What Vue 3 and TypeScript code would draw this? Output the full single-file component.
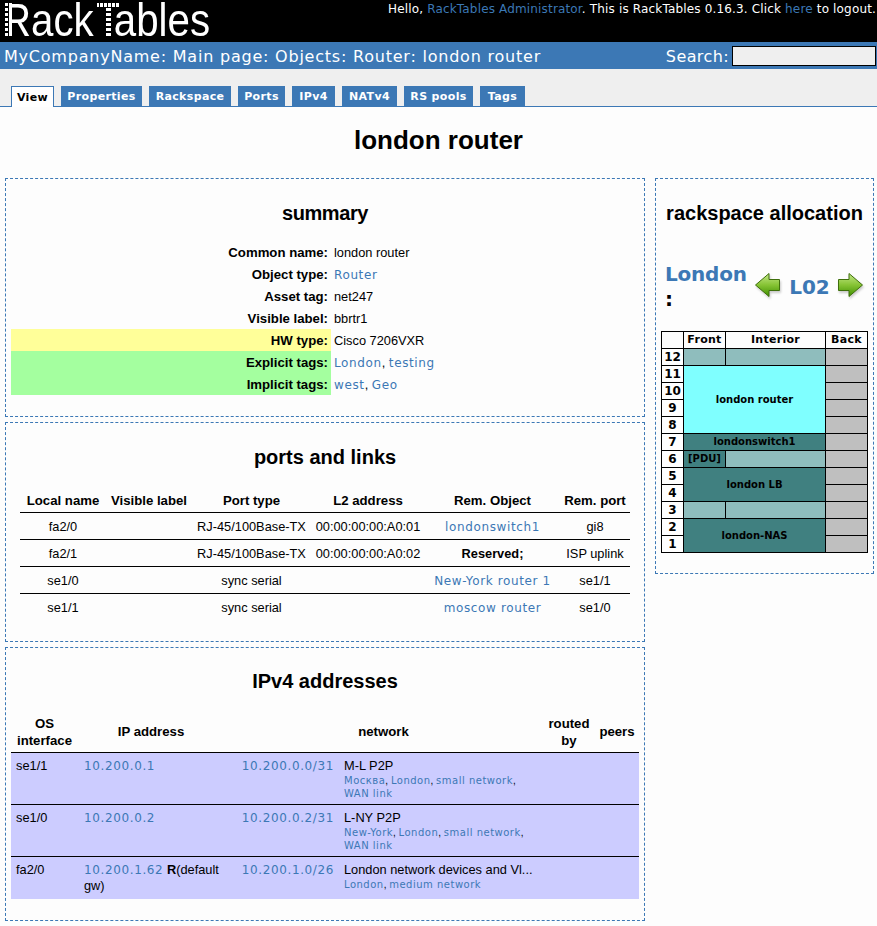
<script setup lang="ts">
const tabs = ['View', 'Properties', 'Rackspace', 'Ports', 'IPv4', 'NATv4', 'RS pools', 'Tags']
const tabWidths = [43, 81, 82, 47, 43, 55, 69, 45]

interface Port { local: string; type: string; l2: string; rem: string; remLink: boolean; remPort: string }
const ports: Port[] = [
  { local: 'fa2/0', type: 'RJ-45/100Base-TX', l2: '00:00:00:00:A0:01', rem: 'londonswitch1', remLink: true, remPort: 'gi8' },
  { local: 'fa2/1', type: 'RJ-45/100Base-TX', l2: '00:00:00:00:A0:02', rem: 'Reserved;', remLink: false, remPort: 'ISP uplink' },
  { local: 'se1/0', type: 'sync serial', l2: '', rem: 'New-York router 1', remLink: true, remPort: 'se1/1' },
  { local: 'se1/1', type: 'sync serial', l2: '', rem: 'moscow router', remLink: true, remPort: 'se1/0' },
]

interface Cell { text: string; cls: string; span?: number; rows?: number }
interface RackRow { n: number; cells: Cell[] }
const rack: RackRow[] = [
  { n: 12, cells: [{ text: '', cls: 'free' }, { text: '', cls: 'free' }, { text: '', cls: 'back' }] },
  { n: 11, cells: [{ text: 'london router', cls: 'sel', span: 2, rows: 4 }, { text: '', cls: 'back' }] },
  { n: 10, cells: [{ text: '', cls: 'back' }] },
  { n: 9, cells: [{ text: '', cls: 'back' }] },
  { n: 8, cells: [{ text: '', cls: 'back' }] },
  { n: 7, cells: [{ text: 'londonswitch1', cls: 'used', span: 2 }, { text: '', cls: 'back' }] },
  { n: 6, cells: [{ text: '[PDU]', cls: 'used' }, { text: '', cls: 'free' }, { text: '', cls: 'back' }] },
  { n: 5, cells: [{ text: 'london LB', cls: 'used', span: 2, rows: 2 }, { text: '', cls: 'back' }] },
  { n: 4, cells: [{ text: '', cls: 'back' }] },
  { n: 3, cells: [{ text: '', cls: 'free' }, { text: '', cls: 'free' }, { text: '', cls: 'back' }] },
  { n: 2, cells: [{ text: 'london-NAS', cls: 'used', span: 2, rows: 2 }, { text: '', cls: 'back' }] },
  { n: 1, cells: [{ text: '', cls: 'back' }] },
]
</script>

<template>
  <div class="page">
    <header class="top">
      <div class="logo">RackTables</div>
      <span class="ear ear-r"></span>
      <span class="ear ear-t"></span>
      <span class="ear-bar"></span>
      <div class="hello">Hello, <a>RackTables Administrator</a>. This is RackTables 0.16.3. Click <a>here</a> to logout.</div>
    </header>
    <nav class="crumbs">
      <div class="path">MyCompanyName: Main page: Objects: Router: london router</div>
      <div class="search"><span>Search:</span><input class="search-box" type="text" /></div>
    </nav>
    <div class="tabs">
      <span v-for="(t, i) in tabs" :key="t" class="tab" :class="{ active: i === 0 }" :style="{ width: tabWidths[i] + 'px' }">{{ t }}</span>
    </div>

    <h1>london router</h1>

    <main class="columns">
      <div class="left">
        <section class="panel summary">
          <h2 class="tight">summary</h2>
          <table class="sum">
            <tbody>
              <tr><th>Common name:</th><td>london router</td></tr>
              <tr><th>Object type:</th><td><a>Router</a></td></tr>
              <tr><th>Asset tag:</th><td>net247</td></tr>
              <tr><th>Visible label:</th><td>bbrtr1</td></tr>
              <tr><th class="yellow">HW type:</th><td>Cisco 7206VXR</td></tr>
              <tr><th class="green">Explicit tags:</th><td><a>London</a>, <a>testing</a></td></tr>
              <tr><th class="green">Implicit tags:</th><td><a>west</a>, <a>Geo</a></td></tr>
            </tbody>
          </table>
        </section>

        <section class="panel links">
          <h2>ports and links</h2>
          <table class="ports">
            <colgroup><col style="width:86px" /><col style="width:86px" /><col style="width:119px" /><col style="width:114px" /><col style="width:135px" /><col style="width:70px" /></colgroup>
            <thead>
              <tr><th>Local name</th><th>Visible label</th><th>Port type</th><th>L2 address</th><th>Rem. Object</th><th>Rem. port</th></tr>
            </thead>
            <tbody>
              <tr v-for="p in ports" :key="p.local">
                <td>{{ p.local }}</td><td></td><td>{{ p.type }}</td><td>{{ p.l2 }}</td>
                <td><a v-if="p.remLink">{{ p.rem }}</a><b v-else>{{ p.rem }}</b></td>
                <td>{{ p.remPort }}</td>
              </tr>
            </tbody>
          </table>
        </section>

        <section class="panel addrs">
          <h2>IPv4 addresses</h2>
          <table class="ipv4">
            <colgroup><col style="width:67px" /><col style="width:146px" /><col style="width:115px" /><col style="width:204px" /><col style="width:52px" /><col style="width:44px" /></colgroup>
            <thead>
              <tr><th>OS<br />interface</th><th>IP address</th><th colspan="2">network</th><th>routed<br />by</th><th>peers</th></tr>
            </thead>
            <tbody>
              <tr>
                <td>se1/1</td><td><a>10.200.0.1</a></td><td class="net"><a>10.200.0.0/31</a></td>
                <td>M-L P2P<div class="tags"><a>Москва</a>, <a>London</a>, <a>small network</a>, <a>WAN link</a></div></td>
                <td></td><td></td>
              </tr>
              <tr>
                <td>se1/0</td><td><a>10.200.0.2</a></td><td class="net"><a>10.200.0.2/31</a></td>
                <td>L-NY P2P<div class="tags"><a>New-York</a>, <a>London</a>, <a>small network</a>, <a>WAN link</a></div></td>
                <td></td><td></td>
              </tr>
              <tr>
                <td>fa2/0</td><td><a>10.200.1.62</a> <b>R</b>(default gw)</td><td class="net"><a>10.200.1.0/26</a></td>
                <td>London network devices and Vl...<div class="tags"><a>London</a>, <a>medium network</a></div></td>
                <td></td><td></td>
              </tr>
            </tbody>
          </table>
        </section>
      </div>

      <aside class="panel right">
        <h2>rackspace allocation</h2>
        <div class="rack-head">
          <div class="row-name"><a>London</a><br /><b>:</b></div>
          <svg class="arrow" width="26" height="28" viewBox="0 0 26 28" aria-hidden="true">
            <defs>
              <linearGradient id="ag" x1="0" y1="0" x2="0" y2="1"><stop offset="0" stop-color="#c4e88a" /><stop offset="0.5" stop-color="#86c334" /><stop offset="1" stop-color="#3f9000" /></linearGradient>
            </defs>
            <path d="M.5 12 L14 .5 V6.5 H24.5 V17.5 H14 V23.5 Z" fill="url(#ag)" stroke="#3f6f0c" stroke-width="1" stroke-linejoin="round" />
          </svg>
          <a class="rack-name">L02</a>
          <svg class="arrow" width="26" height="28" viewBox="0 0 26 28" aria-hidden="true">
            <path d="M24.5 12 L11 .5 V6.5 H.5 V17.5 H11 V23.5 Z" fill="url(#ag)" stroke="#3f6f0c" stroke-width="1" stroke-linejoin="round" />
          </svg>
        </div>
        <table class="rack">
          <colgroup><col style="width:22px" /><col style="width:42px" /><col style="width:100px" /><col style="width:42px" /></colgroup>
          <thead><tr><th></th><th>Front</th><th>Interior</th><th>Back</th></tr></thead>
          <tbody>
            <tr v-for="r in rack" :key="r.n">
              <th>{{ r.n }}</th>
              <td v-for="(c, i) in r.cells" :key="i" :class="c.cls" :colspan="c.span" :rowspan="c.rows">{{ c.text }}</td>
            </tr>
          </tbody>
        </table>
      </aside>
    </main>
  </div>
</template>

<style>
body { background: #fdfdfd; }
</style>

<style scoped>
.page { width: 877px; height: 926px; overflow: hidden; font: 12.8px "Liberation Sans", Arial, sans-serif; color: #000; background: #fdfdfd; }
a { color: #3c78b5; font-family: "DejaVu Sans", Verdana, sans-serif; font-size: 12px; letter-spacing: .62px; }
.top { height: 42px; background: #000; position: relative; overflow: hidden; color: #fff; }
.logo { position: absolute; left: 2px; top: -4px; font: 46px/48px "Liberation Sans", Arial, sans-serif; color: #fff; transform: scaleX(.875); transform-origin: left top; white-space: nowrap; }
.ear { position: absolute; }
.ear-r { left: 4px; top: 3px; width: 8px; height: 33px; background: linear-gradient(90deg, transparent 0 4px, #000 4px 5px, #fff 5px), linear-gradient(90deg, #000 0 1px, transparent 1px), repeating-linear-gradient(#fff 0 3px, #000 3px 5px); }
.ear-t { left: 103px; top: 8px; width: 9px; height: 29px; background: linear-gradient(90deg, #000 0 3px, transparent 3px 8px, #000 8px), repeating-linear-gradient(#fff 0 3px, #000 3px 5px); }
.ear-bar { position: absolute; left: 92px; top: 2px; width: 30px; height: 6px; background: linear-gradient(90deg, #000 0 5px, transparent 5px 28px, #000 28px), linear-gradient(#000 0 1px, transparent 1px 5px, #000 5px), repeating-linear-gradient(90deg, #fff 0 3px, #000 3px 4px); }
.hello { position: absolute; right: 1px; top: 2px; font: 12px/14px "DejaVu Sans", Verdana, sans-serif; white-space: nowrap; letter-spacing: .16px; }
.hello a { letter-spacing: .16px; }
.crumbs { height: 27px; box-sizing: border-box; padding: 1px 1px 0 4px; background: #3c78b5; color: #fff; display: flex; justify-content: space-between; align-items: center; font: 16px "DejaVu Sans", Verdana, sans-serif; }
.path { letter-spacing: .78px; white-space: nowrap; }
.search { display: flex; align-items: center; gap: 3px; letter-spacing: .4px; }
.search-box { width: 144px; height: 20px; box-sizing: border-box; border: 1px solid #000; background: #efefef; padding: 0; margin: 0 0 1px; }
.tabs { height: 38px; box-sizing: border-box; background: #efefef; border-bottom: 1px solid #3c78b5; display: flex; align-items: flex-end; gap: 7px; padding-left: 11px; }
.tab { height: 20px; box-sizing: border-box; background: #3c78b5; color: #fff; font: bold 11px/22px "DejaVu Sans", Verdana, sans-serif; letter-spacing: .35px; text-align: center; }
.tab.active { background: #fff; color: #000; border: 1px solid #3c78b5; border-bottom: 0; height: 21px; margin-bottom: -1px; line-height: 21px; }
h1 { font-size: 26px; line-height: 30px; font-weight: bold; text-align: center; margin: 18px 0 23px; }
h2 { font-size: 20px; line-height: 22px; font-weight: bold; text-align: center; margin: 0; }
h2.tight { letter-spacing: -.4px; }
.columns { display: grid; grid-template-columns: 640px 219px; gap: 10px; padding-left: 5px; align-items: start; }
.left { display: flex; flex-direction: column; gap: 5px; }
.panel { box-sizing: border-box; border: 1px dashed #3c78b5; }
.summary { height: 239px; padding: 23px 5px 0; }
.links { height: 220px; padding: 23px 14px 0; }
.addrs { height: 274px; padding: 22px 5px 0; }
.right { height: 396px; padding: 23px 5px 0; }
table { border-collapse: collapse; border-spacing: 0; }
th { font-size: 13.2px; }
.sum { width: 628px; margin-top: 17px; table-layout: fixed; }
.sum th { width: 317px; height: 22px; padding: 0 3px 0 0; text-align: right; font-weight: bold; }
.sum td { padding: 0 3px; }
.yellow { background: #ffff99; }
.green { background: #a4ff9f; }
.ports { width: 610px; margin-top: 20px; table-layout: fixed; }
.ports th { height: 24px; font-weight: bold; text-align: center; padding: 0; white-space: nowrap; }
.ports td { height: 26px; text-align: center; padding: 0; border-top: 1px solid #000; white-space: nowrap; }
.ipv4 { width: 628px; margin-top: 19px; table-layout: fixed; }
.ipv4 th { font-weight: bold; text-align: center; padding: 0; height: 41px; line-height: 17px; }
.ipv4 td { background: #ccccff; border-top: 1px solid #000; vertical-align: top; padding: 5px 5px 4px; line-height: 16px; }
.ipv4 tr:last-child td { padding-bottom: 5px; }
.ipv4 td:nth-child(2) { padding: 5px 0 4px 6px; }
.ipv4 td:nth-child(4) { padding-right: 0; }
.ipv4 td.net { text-align: right; }
.tags { font-size: 10px; line-height: 13px; }
.tags a { font-size: 10px; letter-spacing: .5px; }
.rack-head { display: flex; align-items: center; margin-top: 38px; height: 50px; padding-left: 4px; }
.row-name { width: 90px; flex: none; font: bold 20px/25px "DejaVu Sans", Verdana, sans-serif; }
.row-name a { font-size: 20px; font-weight: bold; letter-spacing: -.2px; }
.arrow { flex: none; filter: drop-shadow(1px 2px 1px rgba(0, 0, 0, .2)); }
.rack-name { font: bold 20px "DejaVu Sans", Verdana, sans-serif; letter-spacing: 0; width: 57px; text-align: center; }
.rack { width: 206px; margin-top: 19px; table-layout: fixed; font: 11px "DejaVu Sans", Verdana, sans-serif; }
.rack th, .rack td { border: 1px solid #000; height: 16px; padding: 0; text-align: center; line-height: 14px; }
.rack thead th { font-size: 11px; font-weight: bold; letter-spacing: .3px; }
.rack tbody th { font-weight: bold; font-size: 12px; background: #fff; }
.rack td { font-size: 10px; font-weight: bold; }
.free { background: #8fbdbd; }
.sel { background: #7fffff; }
.used { background: #408080; }
.back { background: #bfbfbf; }
</style>
